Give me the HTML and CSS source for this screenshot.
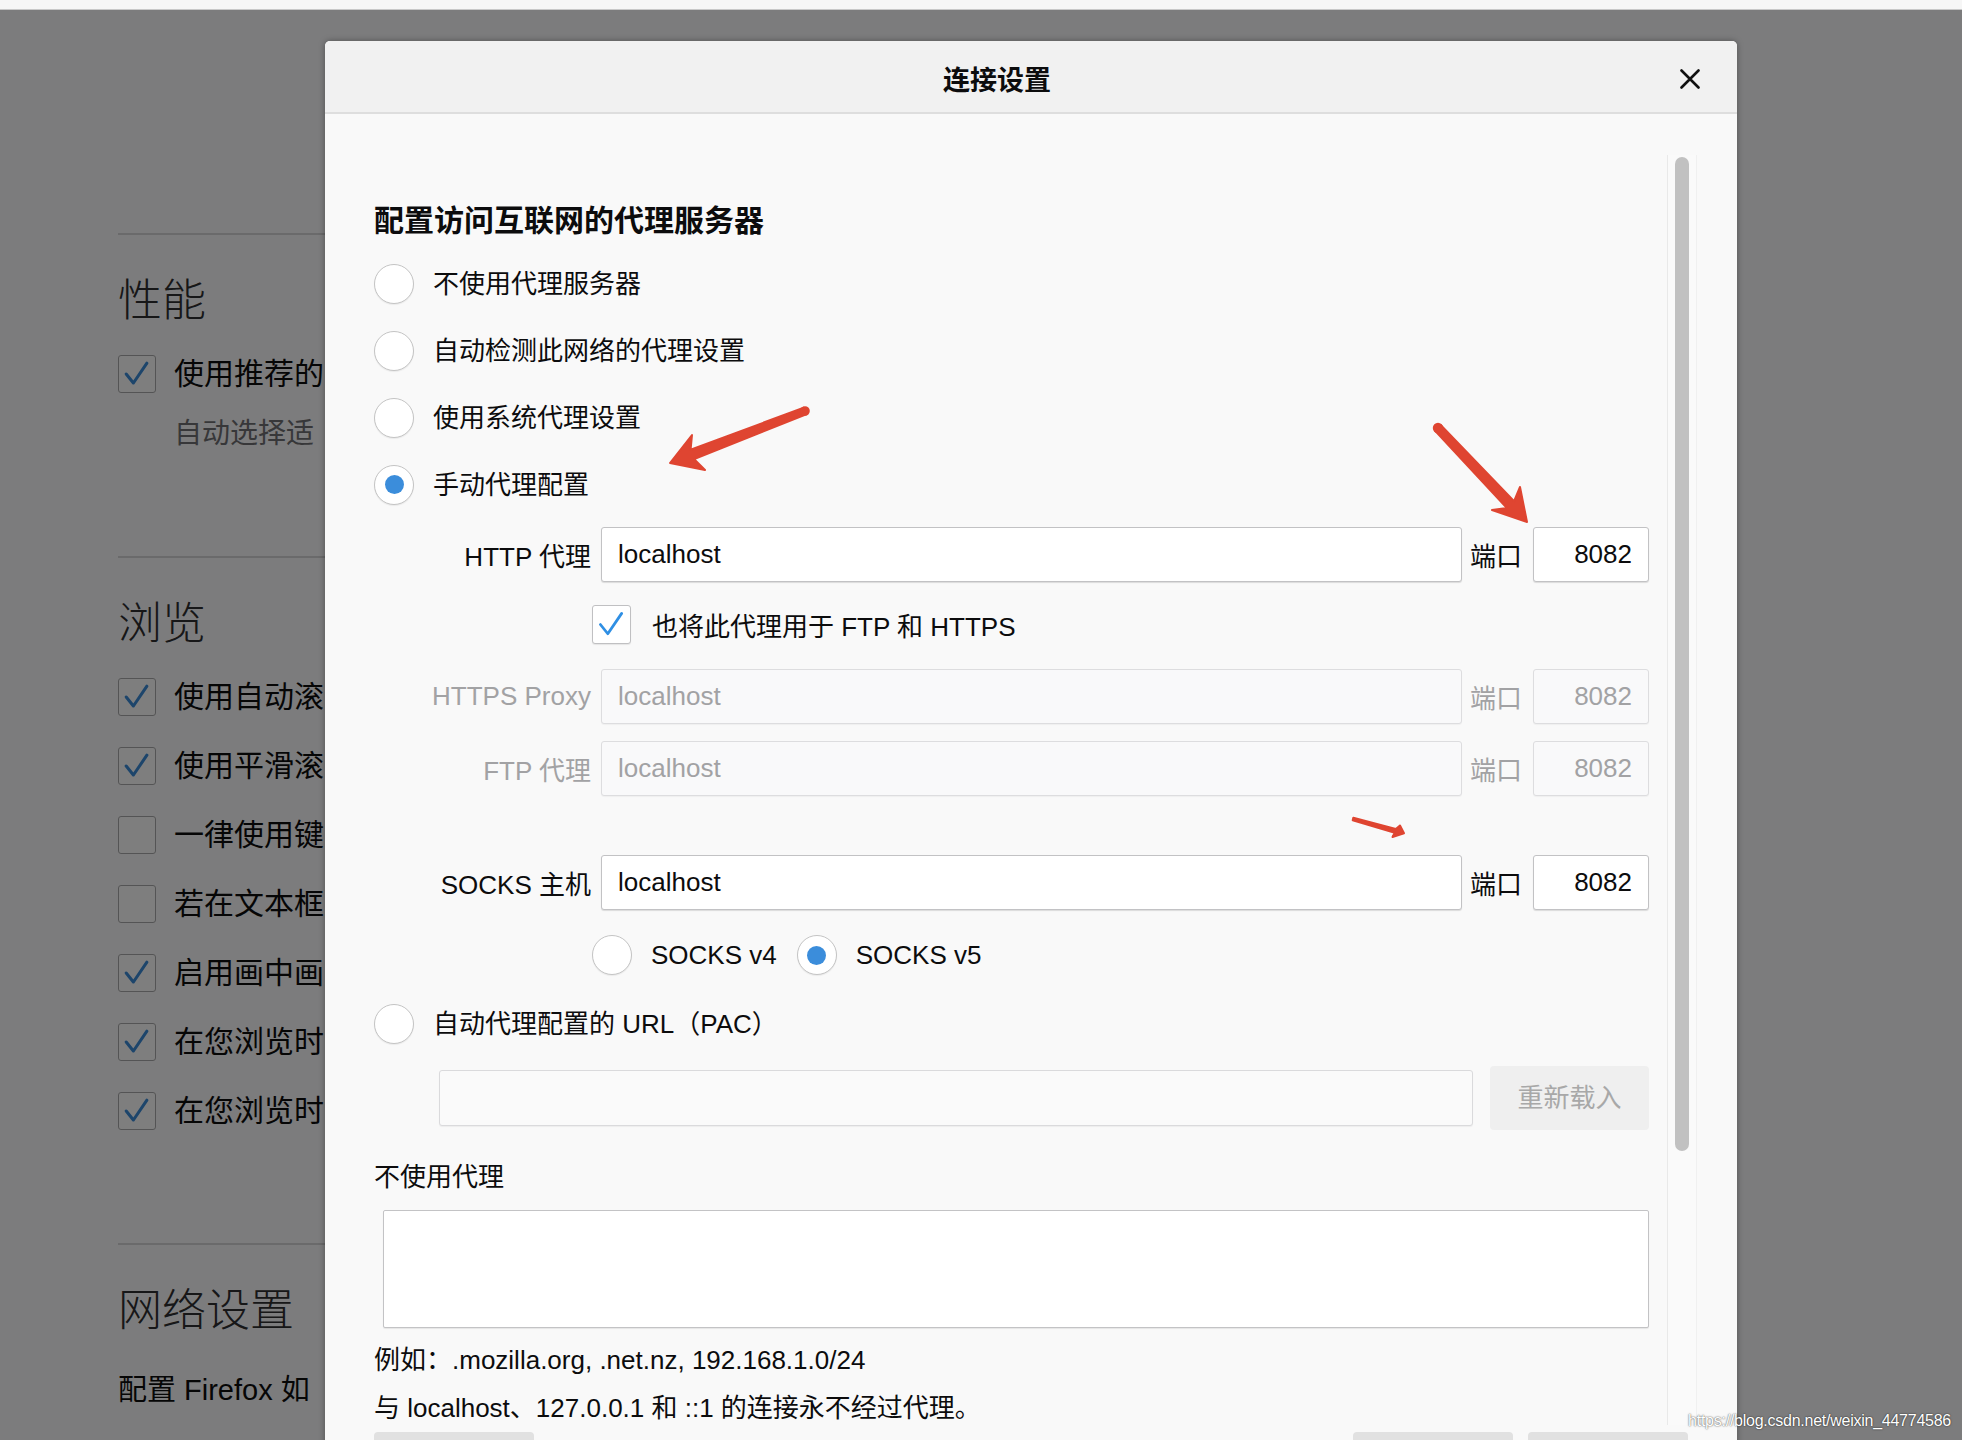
FILE: index.html
```html
<!DOCTYPE html>
<html lang="zh-CN">
<head>
<meta charset="utf-8">
<title>连接设置</title>
<link rel="stylesheet" href="styles.css">
</head>
<body>
<div class="toolbar"></div>
<div class="viewport">
  <main class="prefs">
    <hr class="sep first">
    <h2 class="cat">性能</h2>
    <div class="cb-row"><span class="cbox on"><svg viewBox="0 0 40 40"><path d="M8 20 L16 30 L31 8"/></svg></span><span class="cb-text">使用推荐的</span></div>
    <p class="sub">自动选择适</p>
    <hr class="sep second">
    <h2 class="cat">浏览</h2>
    <div class="cb-list">
      <div class="cb-row"><span class="cbox on"><svg viewBox="0 0 40 40"><path d="M8 20 L16 30 L31 8"/></svg></span><span class="cb-text">使用自动滚</span></div>
      <div class="cb-row"><span class="cbox on"><svg viewBox="0 0 40 40"><path d="M8 20 L16 30 L31 8"/></svg></span><span class="cb-text">使用平滑滚</span></div>
      <div class="cb-row"><span class="cbox"></span><span class="cb-text">一律使用键</span></div>
      <div class="cb-row"><span class="cbox"></span><span class="cb-text">若在文本框</span></div>
      <div class="cb-row"><span class="cbox on"><svg viewBox="0 0 40 40"><path d="M8 20 L16 30 L31 8"/></svg></span><span class="cb-text">启用画中画</span></div>
      <div class="cb-row"><span class="cbox on"><svg viewBox="0 0 40 40"><path d="M8 20 L16 30 L31 8"/></svg></span><span class="cb-text">在您浏览时</span></div>
      <div class="cb-row"><span class="cbox on"><svg viewBox="0 0 40 40"><path d="M8 20 L16 30 L31 8"/></svg></span><span class="cb-text">在您浏览时</span></div>
    </div>
    <hr class="sep third">
    <h2 class="cat">网络设置</h2>
    <p class="net">配置 Firefox 如</p>
  </main>

  <div class="overlay"></div>

  <section class="dialog">
    <header class="dlg-head">
      <div class="dlg-title">连接设置</div>
      <div class="dlg-close"><svg viewBox="0 0 20 20"><path d="M1.5 1.5 L18.5 18.5 M18.5 1.5 L1.5 18.5"/></svg></div>
    </header>

    <div class="dlg-body">
      <div class="content">
        <h3 class="heading">配置访问互联网的代理服务器</h3>

        <div class="radio-list">
          <div class="radio-row"><span class="radio"></span><span>不使用代理服务器</span></div>
          <div class="radio-row"><span class="radio"></span><span>自动检测此网络的代理设置</span></div>
          <div class="radio-row"><span class="radio"></span><span>使用系统代理设置</span></div>
          <div class="radio-row"><span class="radio checked"></span><span>手动代理配置</span></div>
        </div>

        <div class="proxy-row r-http">
          <span class="plabel">HTTP 代理</span>
          <div class="field host">localhost</div>
          <span class="port-label">端口</span>
          <div class="field port">8082</div>
        </div>

        <div class="share-row">
          <span class="check"><svg viewBox="0 0 40 40"><path d="M8 20 L16 30 L31 8"/></svg></span>
          <span>也将此代理用于 FTP 和 HTTPS</span>
        </div>

        <div class="proxy-row disabled r-https">
          <span class="plabel">HTTPS Proxy</span>
          <div class="field host">localhost</div>
          <span class="port-label">端口</span>
          <div class="field port">8082</div>
        </div>

        <div class="proxy-row disabled r-ftp">
          <span class="plabel">FTP 代理</span>
          <div class="field host">localhost</div>
          <span class="port-label">端口</span>
          <div class="field port">8082</div>
        </div>

        <div class="proxy-row r-socks">
          <span class="plabel">SOCKS 主机</span>
          <div class="field host">localhost</div>
          <span class="port-label">端口</span>
          <div class="field port">8082</div>
        </div>

        <div class="socks-ver">
          <span class="radio"></span><span class="ver-label">SOCKS v4</span>
          <span class="radio checked"></span><span>SOCKS v5</span>
        </div>

        <div class="radio-row pac-radio"><span class="radio"></span><span>自动代理配置的 URL（PAC）</span></div>

        <div class="pac-row">
          <div class="field pac"></div>
          <div class="reload">重新载入</div>
        </div>

        <div class="noproxy-label">不使用代理</div>
        <div class="textarea"></div>
        <p class="hint hint-example">例如：.mozilla.org, .net.nz, 192.168.1.0/24</p>
        <p class="hint hint-local">与 localhost、127.0.0.1 和 ::1 的连接永不经过代理。</p>
      </div>
      <div class="scrollbar"><div class="thumb"></div></div>
    </div>

    <footer class="dlg-foot">
      <div class="btn"></div>
      <div class="spacer"></div>
      <div class="btn"></div>
      <div class="btn"></div>
    </footer>
  </section>
</div>

<svg class="marks" viewBox="0 0 1962 1440" width="1962" height="1440">
  <g fill="#df4531" stroke="#df4531" stroke-width="2" stroke-linejoin="round">
    <polygon points="670,463 692,435 690.6,449.7 803.7,407.7 806.3,414.3 694.2,459.1 705,470"/>
    <circle cx="805" cy="411" r="3.8"/>
    <polygon points="1527,522 1520,487 1514.1,501.2 1440.9,425.25 1435.1,430.75 1506.9,508 1492,510"/>
    <circle cx="1438" cy="428" r="4.2"/>
    <polygon points="1404,833.3 1400,825.5 1395.8,829 1353.3,817.8 1352.7,820.2 1394.8,832.8 1392.5,837"/>
  </g>
</svg>
<div class="watermark">https://blog.csdn.net/weixin_44774586</div>
</body>
</html>
```

FILE: styles.css
```css
* { box-sizing: border-box; }

html, body {
  margin: 0;
  padding: 0;
}

body {
  position: relative;
  width: 1962px;
  height: 1440px;
  overflow: hidden;
  font-family: "Liberation Sans", "Noto Sans CJK SC", sans-serif;
  color: #0c0c0d;
  background: #f9f9fa;
}

.toolbar {
  height: 10px;
  background: #f6f6f6;
  border-bottom: 1px solid #c8c8c8;
}

.viewport {
  position: relative;
  height: 1430px;
  overflow: hidden;
  background: #f9f9fa;
}

/* ---------- background preferences page (only the part left of the dialog shows) ---------- */
.prefs {
  padding-left: 118px;
  width: 325px;
  white-space: nowrap;
}

.sep {
  margin: 0;
  height: 2px;
  border: 0;
  background: #d4d4d6;
}
.sep.first { margin-top: 223px; }
.sep.second { margin-top: 102px; }
.sep.third { margin-top: 98px; }

.cat {
  margin: 32px 0 0;
  font-size: 44px;
  line-height: 60px;
  font-weight: 300;
  color: #2e2e30;
  font-family: "Noto Sans CJK SC", "Liberation Sans", sans-serif;
}

.cb-row {
  display: flex;
  align-items: center;
  height: 40px;
  margin-top: 27px;
  font-size: 30px;
  line-height: 40px;
}

.cb-text {
  white-space: nowrap;
}

.cb-list { margin-top: 12px; }
.cb-list .cb-row {
  height: 69px;
  margin-top: 0;
}

.cbox {
  width: 38px;
  height: 38px;
  margin-right: 18px;
  flex: none;
  background: #fdfdfd;
  border: 1.5px solid #a9a9ab;
  border-radius: 3px;
  display: flex;
}
.cbox svg {
  width: 100%;
  height: 100%;
  fill: none;
  stroke: #3a8ad6;
  stroke-width: 3.4;
  stroke-linecap: round;
  stroke-linejoin: round;
}

.sub {
  margin: 20px 0 0;
  padding-left: 56px;
  font-size: 28px;
  line-height: 40px;
  color: #6f6f72;
}

.net {
  margin: 33px 0 0;
  font-size: 29px;
  line-height: 40px;
}

.overlay {
  position: absolute;
  inset: 0;
  background: rgba(0, 0, 0, 0.5);
}

/* ---------- dialog ---------- */
.dialog {
  position: absolute;
  left: 325px;
  top: 31px;
  width: 1412px;
  height: 1440px;
  background: #f9f9f9;
  border-radius: 5px 5px 0 0;
  box-shadow: 0 0 6px rgba(0, 0, 0, 0.35);
  overflow: hidden;
}

.dlg-head {
  display: flex;
  align-items: center;
  height: 73px;
  background: #f1f1f1;
  border-bottom: 2px solid #dedede;
}

.dlg-title {
  flex: 1;
  text-align: center;
  font-family: "Noto Sans CJK SC", sans-serif;
  font-size: 27px;
  font-weight: 700;
  line-height: 36px;
  padding-top: 4px;
}

.dlg-close {
  width: 20px;
  height: 20px;
  margin: 4px 37px 0 11px;
}
.dlg-close svg {
  display: block;
  width: 20px;
  height: 20px;
  fill: none;
  stroke: #111;
  stroke-width: 2.6;
  stroke-linecap: round;
}

.dlg-body {
  display: flex;
  height: 1314px;
  padding-left: 49px;
  overflow: hidden;
}

.content {
  width: 1275px;
  flex: none;
  padding-top: 84px;
  font-size: 26px;
}

.scrollbar {
  width: 30px;
  flex: none;
  margin: 41px 0 3px 18px;
  border-left: 1px solid #e9e9e9;
  border-right: 1px solid #f0f0f0;
  background: #fafafa;
}
.thumb {
  width: 14px;
  height: 994px;
  margin: 2px 0 0 7px;
  border-radius: 7px;
  background: #c1c1c1;
}

.heading {
  margin: 0;
  height: 40px;
  font-family: "Noto Sans CJK SC", sans-serif;
  font-size: 30px;
  font-weight: 700;
  line-height: 40px;
}

.radio-list { margin-top: 12px; }

.radio-row {
  display: flex;
  align-items: center;
  height: 67px;
  line-height: 36px;
}

.radio {
  width: 40px;
  height: 40px;
  flex: none;
  margin-right: 19px;
  border-radius: 50%;
  background: #fff;
  border: 1.5px solid #c4c4c4;
  box-shadow: 0 1px 1px rgba(0, 0, 0, 0.06);
  display: flex;
  align-items: center;
  justify-content: center;
}
.radio.checked::after {
  content: "";
  width: 19px;
  height: 19px;
  border-radius: 50%;
  background: #3b8ddb;
}

.proxy-row {
  display: flex;
  align-items: center;
  height: 55px;
}
.r-http { margin-top: 9px; }
.r-https { margin-top: 25px; }
.r-ftp { margin-top: 17px; }
.r-socks { margin-top: 59px; }

.plabel {
  width: 217px;
  margin-right: 10px;
  text-align: right;
  flex: none;
  white-space: nowrap;
}

.field {
  height: 55px;
  background: #fff;
  border: 1px solid #c2c2c4;
  border-radius: 3px;
  box-shadow: 0 1px 1px rgba(0, 0, 0, 0.12);
  line-height: 53px;
  padding: 0 16px;
}
.field.host { flex: 1; }
.field.port {
  width: 116px;
  flex: none;
  text-align: right;
}

.port-label {
  margin: 0 11px 0 8px;
  flex: none;
}

.proxy-row.disabled { color: #a2a2a4; }
.proxy-row.disabled .field {
  background: #f9f9fa;
  border-color: #dddddf;
  box-shadow: 0 1px 1px rgba(0, 0, 0, 0.04);
}

.share-row {
  display: flex;
  align-items: center;
  height: 40px;
  margin-top: 22px;
  padding-left: 218px;
}
.check {
  width: 39px;
  height: 39px;
  flex: none;
  margin-right: 21px;
  background: #fff;
  border: 1.5px solid #c0c0c2;
  border-radius: 3px;
  box-shadow: 0 1px 1px rgba(0, 0, 0, 0.08);
  display: flex;
}
.check svg {
  width: 100%;
  height: 100%;
  fill: none;
  stroke: #2f8fe4;
  stroke-width: 3;
  stroke-linecap: round;
  stroke-linejoin: round;
}

.socks-ver {
  display: flex;
  align-items: center;
  height: 40px;
  margin-top: 25px;
  padding-left: 218px;
}
.ver-label { margin-right: 20px; }

.radio-row.pac-radio {
  height: 40px;
  margin-top: 29px;
}

.pac-row {
  display: flex;
  align-items: center;
  height: 64px;
  margin-top: 22px;
  padding-left: 65px;
}
.field.pac {
  flex: 1;
  height: 56px;
  background: #fafafa;
  border-color: #dadadc;
  box-shadow: 0 1px 1px rgba(0, 0, 0, 0.05);
}
.reload {
  width: 159px;
  height: 64px;
  flex: none;
  margin-left: 17px;
  border-radius: 4px;
  background: #efefef;
  color: #a8a8a8;
  text-align: center;
  line-height: 64px;
}

.noproxy-label {
  margin-top: 29px;
  line-height: 36px;
}

.textarea {
  height: 118px;
  margin: 15px 0 0 9px;
  background: #fff;
  border: 1.5px solid #c3c3c5;
  border-radius: 2px;
  box-shadow: 0 1px 1px rgba(0, 0, 0, 0.08);
}

.hint {
  margin: 0;
  line-height: 36px;
}
.hint-example { margin-top: 14px; }
.hint-local { margin-top: 12px; }

.dlg-foot {
  display: flex;
  padding: 4px 49px 0;
  gap: 15px;
}
.dlg-foot .btn {
  width: 160px;
  height: 60px;
  border-radius: 4px;
  background: #e1e1e1;
  flex: none;
}
.dlg-foot .spacer { flex: 1; }

/* ---------- annotations ---------- */
.marks {
  position: absolute;
  left: 0;
  top: 0;
  pointer-events: none;
}

.watermark {
  position: absolute;
  right: 11px;
  bottom: 9px;
  font-family: "Liberation Sans", sans-serif;
  font-size: 16px;
  line-height: 20px;
  color: #fff;
  letter-spacing: -0.25px;
  text-shadow: 0 0 2px rgba(0, 0, 0, 0.6), 0 0 1px rgba(0, 0, 0, 0.4);
}
```
